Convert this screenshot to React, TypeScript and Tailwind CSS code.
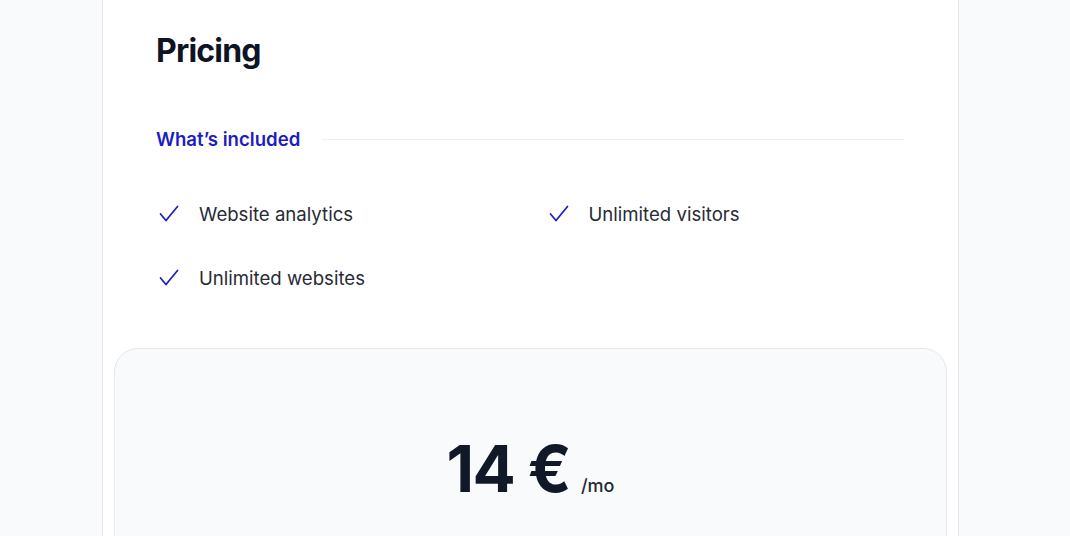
const features = ['Website analytics', 'Unlimited visitors', 'Unlimited websites'];

function CheckMark() {
  return (
    <svg viewBox="0 0 24 24" className="h-6 w-6 flex-none" fill="none" stroke="#1c1cc4" strokeWidth={1.7} strokeLinecap="round" strokeLinejoin="round" aria-hidden="true">
      <path d="M3.5 12 9 18.5 20.5 4.5" />
    </svg>
  );
}

export default function App() {
  return (
    <div className="min-h-screen overflow-hidden bg-[#f9fafb] font-['Inter',sans-serif]">
      <div className="ml-[102px] -mt-[40px] w-[857px] rounded-[32px] border border-[#e5e7eb] bg-white pb-10">
        <div className="pl-[53px] pr-[53px] pt-[70px]">
          <h3 className="text-[32px] font-bold leading-[40px] tracking-tight text-[#0f1425]">Pricing</h3>
          <div className="mt-[54px] flex items-center gap-x-[22px]">
            <h4 className="text-[18.6px] font-semibold leading-[28px] text-[#1c1cc4]">What’s included</h4>
            <div className="h-px flex-auto bg-[#f0f1f3]" />
          </div>
          <ul className="mt-[47px] grid grid-cols-2 gap-x-[30px] gap-y-[36px] text-[18.6px] leading-[28px] text-[#272b37]">
            {features.map((f) => (
              <li key={f} className="flex items-center gap-x-[18px] pl-[1px]">
                <CheckMark />
                <span>{f}</span>
              </li>
            ))}
          </ul>
        </div>
        <div className="mx-[11px] mt-[56px] rounded-[24px] border border-[#e5e7eb] bg-[#f9fafb] pb-[120px] pt-[88px] text-center">
          <p className="flex items-baseline justify-center gap-x-[11px]">
            <span className="text-[64px] font-bold leading-[64px] tracking-tight text-[#111827]">14 €</span>
            <span className="text-[18px] font-medium leading-[24px] text-[#1f2937]">/mo</span>
          </p>
        </div>
      </div>
    </div>
  );
}
